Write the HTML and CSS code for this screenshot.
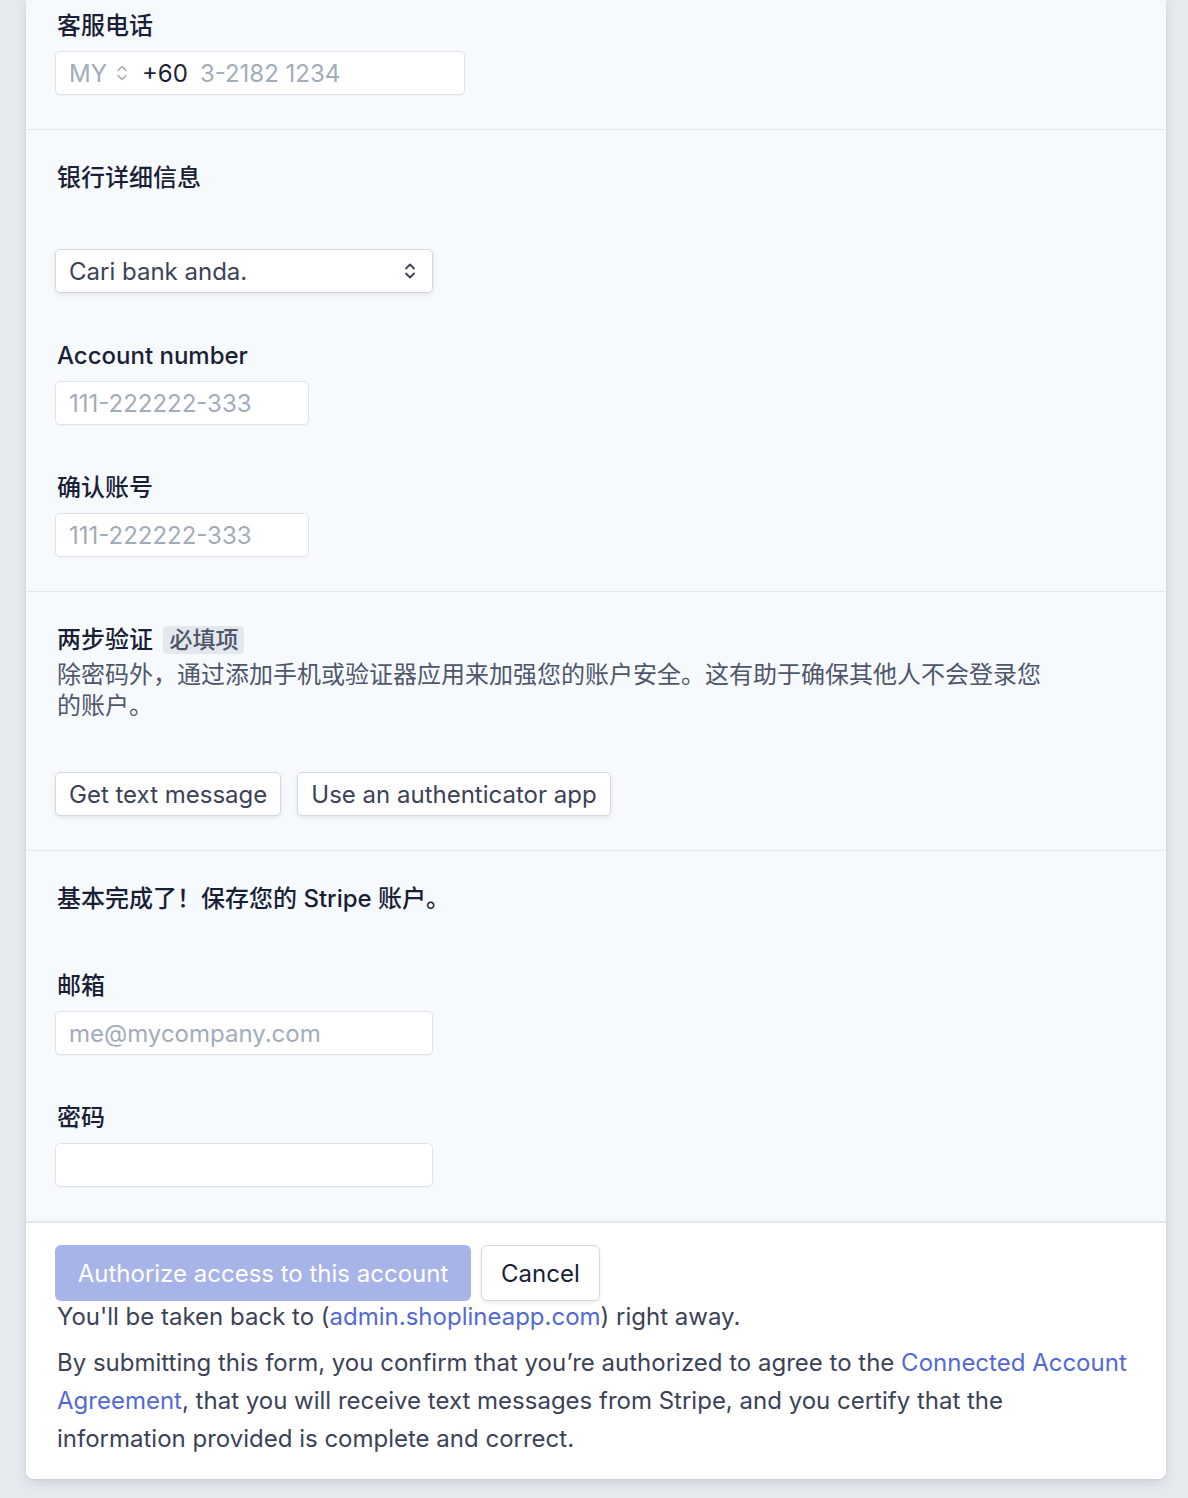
FILE: index.html
```html
<!DOCTYPE html>
<html lang="zh-CN">

<head>
  <meta charset="UTF-8">
  <meta name="viewport" content="width=device-width, initial-scale=1.0">
  <title>Stripe 账户</title>
  <link rel="stylesheet" href="styles.css">
</head>

<body>
  <div class="page">
    <div class="card">
      <section class="section section--first">
        <label class="label">客服电话</label>
        <div class="input input--phone">
          <span class="phone__country">MY</span>
          <svg class="phone__chevron" width="12" height="18" viewBox="0 0 12 18" fill="none" stroke="#a3acb9" stroke-width="1.6" stroke-linecap="round" stroke-linejoin="round">
            <path d="M2 6.5 6 2.5l4 4" />
            <path d="M2 11.5l4 4 4-4" />
          </svg>
          <span class="phone__code">+60</span>
          <span class="placeholder">3-2182 1234</span>
        </div>
      </section>

      <section class="section">
        <h2 class="heading">银行详细信息</h2>
        <div class="select">
          <span>Cari bank anda.</span>
          <svg width="12" height="18" viewBox="0 0 12 18" fill="none" stroke="#3c4257" stroke-width="1.8" stroke-linecap="round" stroke-linejoin="round">
            <path d="M2 6.5 6 2.5l4 4" />
            <path d="M2 11.5l4 4 4-4" />
          </svg>
        </div>
        <label class="label label--spaced">Account number</label>
        <div class="input input--short"><span class="placeholder">111-222222-333</span></div>
        <label class="label label--spaced">确认账号</label>
        <div class="input input--short"><span class="placeholder">111-222222-333</span></div>
      </section>

      <section class="section">
        <div class="label">两步验证 <span class="badge">必填项</span></div>
        <p class="description">除密码外，通过添加手机或验证器应用来加强您的账户安全。这有助于确保其他人不会登录您的账户。</p>
        <div class="actions">
          <button class="btn">Get text message</button>
          <button class="btn">Use an authenticator app</button>
        </div>
      </section>

      <section class="section section--last">
        <h2 class="heading">基本完成了！保存您的 Stripe 账户。</h2>
        <label class="label label--wide">邮箱</label>
        <div class="input input--medium"><span class="placeholder">me@mycompany.com</span></div>
        <label class="label label--spaced">密码</label>
        <div class="input input--medium"></div>
      </section>

      <footer class="footer">
        <div class="footer__buttons">
          <button class="btn btn--primary">Authorize access to this account</button>
          <button class="btn btn--cancel">Cancel</button>
        </div>
        <p class="footer__note">You'll be taken back to (<a href="#">admin.shoplineapp.com</a>) right away.</p>
        <p class="footer__legal">By submitting this form, you confirm that you’re authorized to agree to the <a href="#">Connected Account Agreement</a>, that you will receive text messages from Stripe, and you certify that the information provided is complete and correct.</p>
      </footer>
    </div>
  </div>
</body>

</html>
```

FILE: styles.css
```css
html {
  font-size: 24px;
}

body {
  background-color: #e6e9ee;
  margin: 0;
}

* {
  font-family: Inter, "Noto Sans CJK SC", sans-serif;
}

.page {
  padding: 0 22px 18px 26px;
}

.card {
  background-color: #f7fafc;
  border-radius: 0 0 8px 8px;
  box-shadow: 0 4px 12px rgba(50, 50, 93, .12), 0 1px 3px rgba(0, 0, 0, .06);
  overflow: hidden;
}

.section {
  border-bottom: 1px solid #e3e8ee;
  display: flex;
  flex-direction: column;
  align-items: flex-start;
  padding: 33px 30px 34px 29px;
}

.section--first {
  padding-top: 11px;
}

.section--last {
  border-bottom: 2px solid #e3e8ee;
}

.label,
.heading {
  color: #1a1f36;
  font-size: 24px;
  font-weight: 500;
  line-height: 30px;
  margin: 0 0 10px 2px;
}

.heading {
  margin-bottom: 56px;
}

.label--spaced {
  margin-top: 48px;
}

.label--wide {
  margin-top: 1px;
}

.badge {
  background-color: #e3e8ee;
  border-radius: 4px;
  color: #4f566b;
  font-size: 23px;
  margin-left: 4px;
  padding: 0 6px;
}

.description {
  color: #4f566b;
  font-size: 24px;
  line-height: 31px;
  margin: -6px 0 0 2px;
  max-width: 992px;
}

.input,
.select {
  align-items: center;
  background-color: #fff;
  border: 1px solid #dfe3e9;
  border-radius: 5px;
  box-shadow: 0 1px 1px rgba(0, 0, 0, .03);
  box-sizing: border-box;
  color: #1a1f36;
  display: flex;
  font-size: 24px;
  height: 44px;
  padding: 0 13px;
}

.input--phone {
  width: 410px;
}

.input--short {
  width: 254px;
}

.input--medium {
  width: 378px;
}

.select {
  border-color: #d5d9df;
  box-shadow: 0 2px 4px rgba(0, 0, 0, .08);
  color: #3c4257;
  justify-content: space-between;
  padding-right: 16px;
  width: 378px;
}

.placeholder {
  color: #a3acb9;
}

.phone__country {
  color: #a3acb9;
}

.phone__chevron {
  margin: 0 14px 0 9px;
}

.phone__code {
  color: #1a1f36;
  margin-right: 12px;
}

.actions {
  display: flex;
  gap: 16px;
  margin-top: 51px;
}

.btn {
  appearance: none;
  background-color: #fff;
  border: 1px solid #d5d9df;
  border-radius: 5px;
  box-shadow: 0 2px 4px rgba(0, 0, 0, .08);
  color: #3c4257;
  cursor: pointer;
  font-size: 24px;
  height: 44px;
  padding: 0 13px;
}

.footer {
  background-color: #fff;
  padding: 22px 30px 21px 29px;
}

.footer__buttons {
  display: flex;
  gap: 10px;
}

.btn--primary {
  background-color: #a7b4e8;
  border: none;
  border-radius: 6px;
  box-shadow: none;
  color: #fff;
  height: 56px;
  padding: 0 20px;
  width: 416px;
}

.btn--cancel {
  border-radius: 6px;
  color: #1a1f36;
  height: 56px;
  padding: 0 19px;
}

.footer__note,
.footer__legal {
  color: #3c4257;
  font-size: 24px;
  margin: 0 0 0 2px;
}

.footer__note {
  line-height: 30px;
  margin-top: 1px;
}

.footer__legal {
  line-height: 38px;
  margin-top: 12px;
}

.footer a {
  color: #5469d4;
  text-decoration: none;
}
```
